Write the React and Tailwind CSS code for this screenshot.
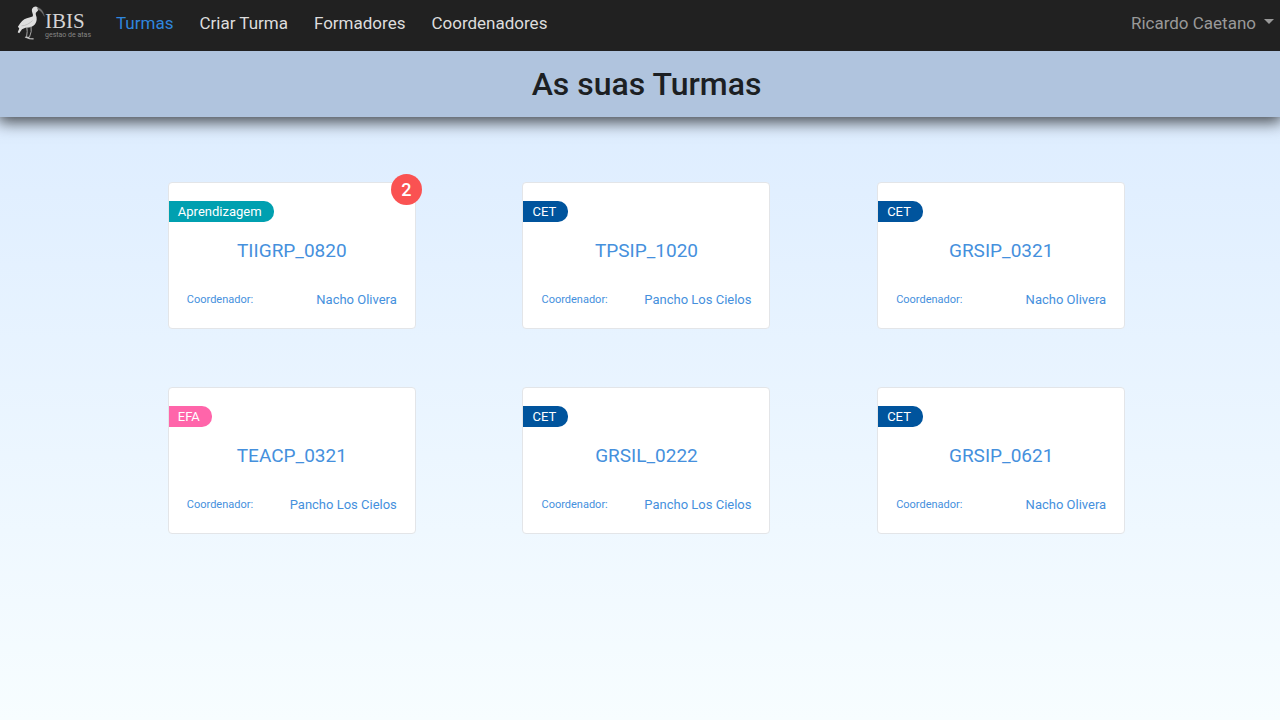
const links = ['Turmas', 'Criar Turma', 'Formadores', 'Coordenadores'];

const groups = [
  { type: 'Aprendizagem', name: 'TIIGRP_0820', coordinator: 'Nacho Olivera', alerts: 2 },
  { type: 'CET', name: 'TPSIP_1020', coordinator: 'Pancho Los Cielos' },
  { type: 'CET', name: 'GRSIP_0321', coordinator: 'Nacho Olivera' },
  { type: 'EFA', name: 'TEACP_0321', coordinator: 'Pancho Los Cielos' },
  { type: 'CET', name: 'GRSIL_0222', coordinator: 'Pancho Los Cielos' },
  { type: 'CET', name: 'GRSIP_0621', coordinator: 'Nacho Olivera' },
];

const typeColors = {
  Aprendizagem: 'bg-[#00a0b0]',
  CET: 'bg-[#00549d]',
  EFA: 'bg-[#ff65aa]',
};

function Logo() {
  return (
    <a href="#inicio" aria-label="IBIS gestao de atas" className="flex w-[73px] items-center">
      <svg viewBox="0 0 28 36" className="h-9 w-7 shrink-0" aria-hidden="true">
        <path
          d="M15.3 3.6C16.4 1.6 18.8 1 20.6 2.2C22 3.2 21.9 4.8 20.6 6C19 7.3 18.4 8.3 18.9 10C20.2 12.8 20 16.6 18 19.2C16 21.8 12.2 22.9 8.4 22.7L5 24.2L2.2 28.2L0.7 27.3L2.3 23.4L0.9 21.8L3.2 18.2C5.6 14.8 8.8 13 12.4 12.4L15.6 11.4C16.4 10.2 15.7 8.8 15.2 7.2C14.8 5.9 14.7 4.7 15.3 3.6Z"
          fill="#dedede"
        />
        <path d="M20.4 2.4C24 3.2 26.4 6.2 27.4 11.4C25.6 7.6 23.6 5.2 20.8 4.4Z" fill="#777" stroke="#666" strokeWidth="0.4" />
        <path d="M4.5 20.8C8.5 20.8 12.3 18.8 15.5 15.6" fill="none" stroke="#aaa" strokeWidth="0.6" />
        <path d="M9.8 22.2L10.2 26.5L9.5 32.4M14 21.2L14.2 26.5L12.4 32.4" fill="none" stroke="#a8a8a8" strokeWidth="1" />
        <path d="M8 32L12.6 33.6L16.6 33.9M9.5 32.4L12.2 32.4" fill="none" stroke="#c4c4c4" strokeWidth="1.3" />
      </svg>
      <span className="flex flex-col pt-1" aria-hidden="true">
        <span className="font-['Liberation_Serif',serif] text-[21px] leading-[20px] text-[#d4d4d4]">IBIS</span>
        <span className="text-[7px] leading-[9px] whitespace-nowrap text-[#858585]">gestao de atas</span>
      </span>
    </a>
  );
}

function GroupCard({ group }) {
  return (
    <a
      href={'#' + group.name}
      className="relative block w-[248px] rounded border border-[#e3e5e8] bg-white pt-[18px] pb-[19px] text-[#4590dd]"
    >
      {group.alerts && (
        <span className="absolute -top-[9px] -right-[7px] flex h-[31px] w-[31px] items-center justify-center rounded-full bg-[#fa5252] text-lg font-medium text-white">
          {group.alerts}
        </span>
      )}
      <span className={'block w-fit rounded-r-[10px] pr-3 pl-[9px] text-[13px] leading-[21px] text-white ' + typeColors[group.type]}>
        {group.type}
      </span>
      <h2 className="mt-4 text-center text-[19px] leading-[26px]">{group.name}</h2>
      <div className="mt-[27px] flex items-center justify-between px-[18px] leading-[18px]">
        <span className="text-[11px]">Coordenador:</span>
        <span className="text-[13px]">{group.coordinator}</span>
      </div>
    </a>
  );
}

export default function App() {
  return (
    <div className="min-h-screen bg-linear-to-b from-[#d9eaff] to-[#f7fdff] font-[Roboto,sans-serif]">
      <header className="relative z-10 flex h-[51px] items-center justify-between bg-[#212121] pr-1.5 pb-[5px] pl-[17px]">
        <div className="flex items-center gap-[26px]">
          <Logo />
          <nav className="flex gap-[26px] text-[17px] leading-6">
            {links.map((link, i) => (
              <a key={link} href={'#' + link} className={i === 0 ? 'text-[#2f86de]' : 'text-[#dddddd]'}>
                {link}
              </a>
            ))}
          </nav>
        </div>
        <button type="button" className="flex items-center gap-2 text-[17px] leading-6 text-[#999999]">
          Ricardo Caetano
          <svg viewBox="0 0 10 5" className="mb-1 h-[5px] w-[10px]" aria-hidden="true">
            <path d="M0 0H10L5 5Z" fill="currentColor" />
          </svg>
        </button>
      </header>
      <div className="bg-[#b0c4de] py-[13px] pl-[13px] shadow-[0_3px_15px_2px_rgba(0,0,0,0.7)]">
        <h1 className="text-center text-[32px] leading-10 font-medium text-[#1c1f23]">As suas Turmas</h1>
      </div>
      <main className="pt-[65px] pb-16 pl-[13px]">
        <div className="mx-auto grid max-w-[1064px] grid-cols-[repeat(auto-fit,minmax(300px,1fr))] justify-items-center gap-y-[58px]">
          {groups.map((group) => (
            <GroupCard key={group.name} group={group} />
          ))}
        </div>
      </main>
    </div>
  );
}
